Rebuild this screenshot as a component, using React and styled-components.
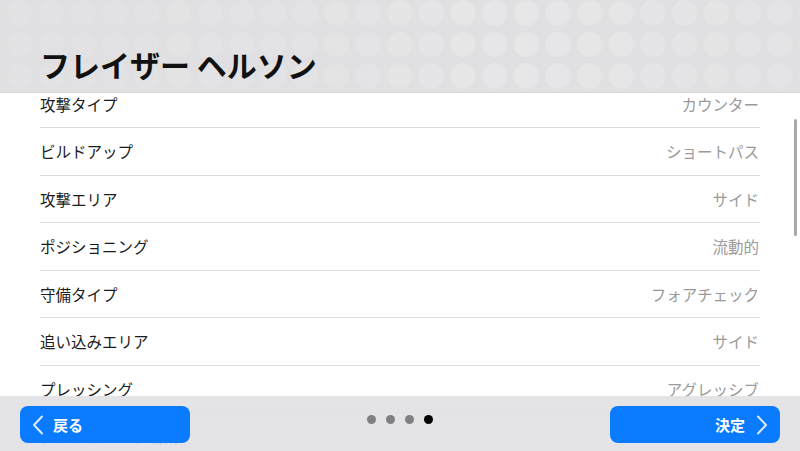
import React from 'react';
import styled, { createGlobalStyle } from 'styled-components';

const GlobalStyle = createGlobalStyle`
  html, body {
    margin: 0;
    padding: 0;
    background: #ffffff;
    font-family: "Noto Sans CJK JP", "Noto Sans", sans-serif;
  }
`;

const Screen = styled.div`
  position: relative;
  width: 800px;
  height: 451px;
  overflow: hidden;
  display: flex;
  flex-direction: column;
  background: #ffffff;
`;

const Header = styled.header`
  position: relative;
  flex: 0 0 93px;
  display: flex;
  align-items: flex-end;
  padding: 0 40px 13px;
  box-sizing: border-box;
  background: #e0e0e2;
  border-bottom: 1px solid #d9d9db;
  z-index: 1;

  &::before {
    content: '';
    position: absolute;
    inset: 0;
    background-image: radial-gradient(circle, rgba(255, 255, 255, 0.22) 12px, transparent 13.5px);
    background-size: 31.67px 31.5px;
    background-position: 4px -2.75px;
    -webkit-mask-image: linear-gradient(to right, rgba(0,0,0,0.3), rgba(0,0,0,0.55) 40%, #000 65%, rgba(0,0,0,0.6));
    mask-image: linear-gradient(to right, rgba(0,0,0,0.3), rgba(0,0,0,0.55) 40%, #000 65%, rgba(0,0,0,0.6));
  }
`;

const Title = styled.h1`
  position: relative;
  margin: 0;
  font-size: 30px;
  font-weight: 700;
  color: #111;
  letter-spacing: 0;
  line-height: 1;
`;

const Viewport = styled.div`
  position: relative;
  flex: 1;
  overflow: hidden;
`;

const List = styled.ul`
  list-style: none;
  margin: -12.5px 40px 0;
  padding: 0;
`;

const Row = styled.li`
  height: 47.5px;
  box-sizing: border-box;
  display: flex;
  align-items: center;
  justify-content: space-between;
  border-bottom: 1px solid #dcdcde;
  font-size: 15.5px;
`;

const Label = styled.span`
  color: #1c1c1c;
`;

const Value = styled.span`
  color: #9a9a9a;
  padding-right: 1px;
`;

const ScrollThumb = styled.div`
  position: absolute;
  right: 3px;
  top: 26px;
  width: 3px;
  height: 117px;
  border-radius: 2px;
  background: #a8a8a8;
`;

const BottomBar = styled.footer`
  position: absolute;
  left: 0;
  right: 0;
  bottom: 0;
  height: 55px;
  display: flex;
  align-items: flex-start;
  justify-content: space-between;
  padding: 10px 20px 0;
  box-sizing: border-box;
  background: rgba(226, 226, 228, 0.92);
`;

const NavButton = styled.button`
  width: 170px;
  height: 37px;
  border: none;
  border-radius: 8px;
  background: #0a7bff;
  color: #fff;
  font-family: inherit;
  font-size: 15px;
  font-weight: 700;
  display: flex;
  align-items: center;
  justify-content: ${p => (p.$next ? 'flex-end' : 'flex-start')};
  gap: ${p => (p.$next ? '11px' : '9px')};
  padding: ${p => (p.$next ? '0 12px 0 0' : '0 0 0 12px')};
  cursor: pointer;
`;

const Dots = styled.div`
  display: flex;
  gap: 10px;
  padding-top: 9px;
`;

const Dot = styled.span`
  width: 9px;
  height: 9px;
  border-radius: 50%;
  background: ${p => (p.$active ? '#000' : '#808082')};
`;

const Chevron = ({ dir }) => (
  <svg width="12" height="20" viewBox="0 0 12 20" fill="none">
    <polyline
      points={dir === 'left' ? '10,1.5 2,10 10,18.5' : '2,1.5 10,10 2,18.5'}
      stroke="#ffffff"
      strokeOpacity="0.85"
      strokeWidth="2"
      strokeLinecap="round"
      strokeLinejoin="round"
    />
  </svg>
);

const tactics = [
  ['攻撃タイプ', 'カウンター'],
  ['ビルドアップ', 'ショートパス'],
  ['攻撃エリア', 'サイド'],
  ['ポジショニング', '流動的'],
  ['守備タイプ', 'フォアチェック'],
  ['追い込みエリア', 'サイド'],
  ['プレッシング', 'アグレッシブ'],
  ['ディフェンシブ戦術', ''],
];

function App() {
  return (
    <Screen>
      <GlobalStyle />
      <Header>
        <Title>フレイザー ヘルソン</Title>
      </Header>

      <Viewport>
        <List>
          {tactics.map(([label, value]) => (
            <Row key={label}>
              <Label>{label}</Label>
              <Value>{value}</Value>
            </Row>
          ))}
        </List>
        <ScrollThumb />
      </Viewport>

      <BottomBar>
        <NavButton type="button">
          <Chevron dir="left" />
          戻る
        </NavButton>
        <Dots>
          {[0, 1, 2, 3].map(i => (
            <Dot key={i} $active={i === 3} />
          ))}
        </Dots>
        <NavButton type="button" $next>
          決定
          <Chevron dir="right" />
        </NavButton>
      </BottomBar>
    </Screen>
  );
}

export default App;
